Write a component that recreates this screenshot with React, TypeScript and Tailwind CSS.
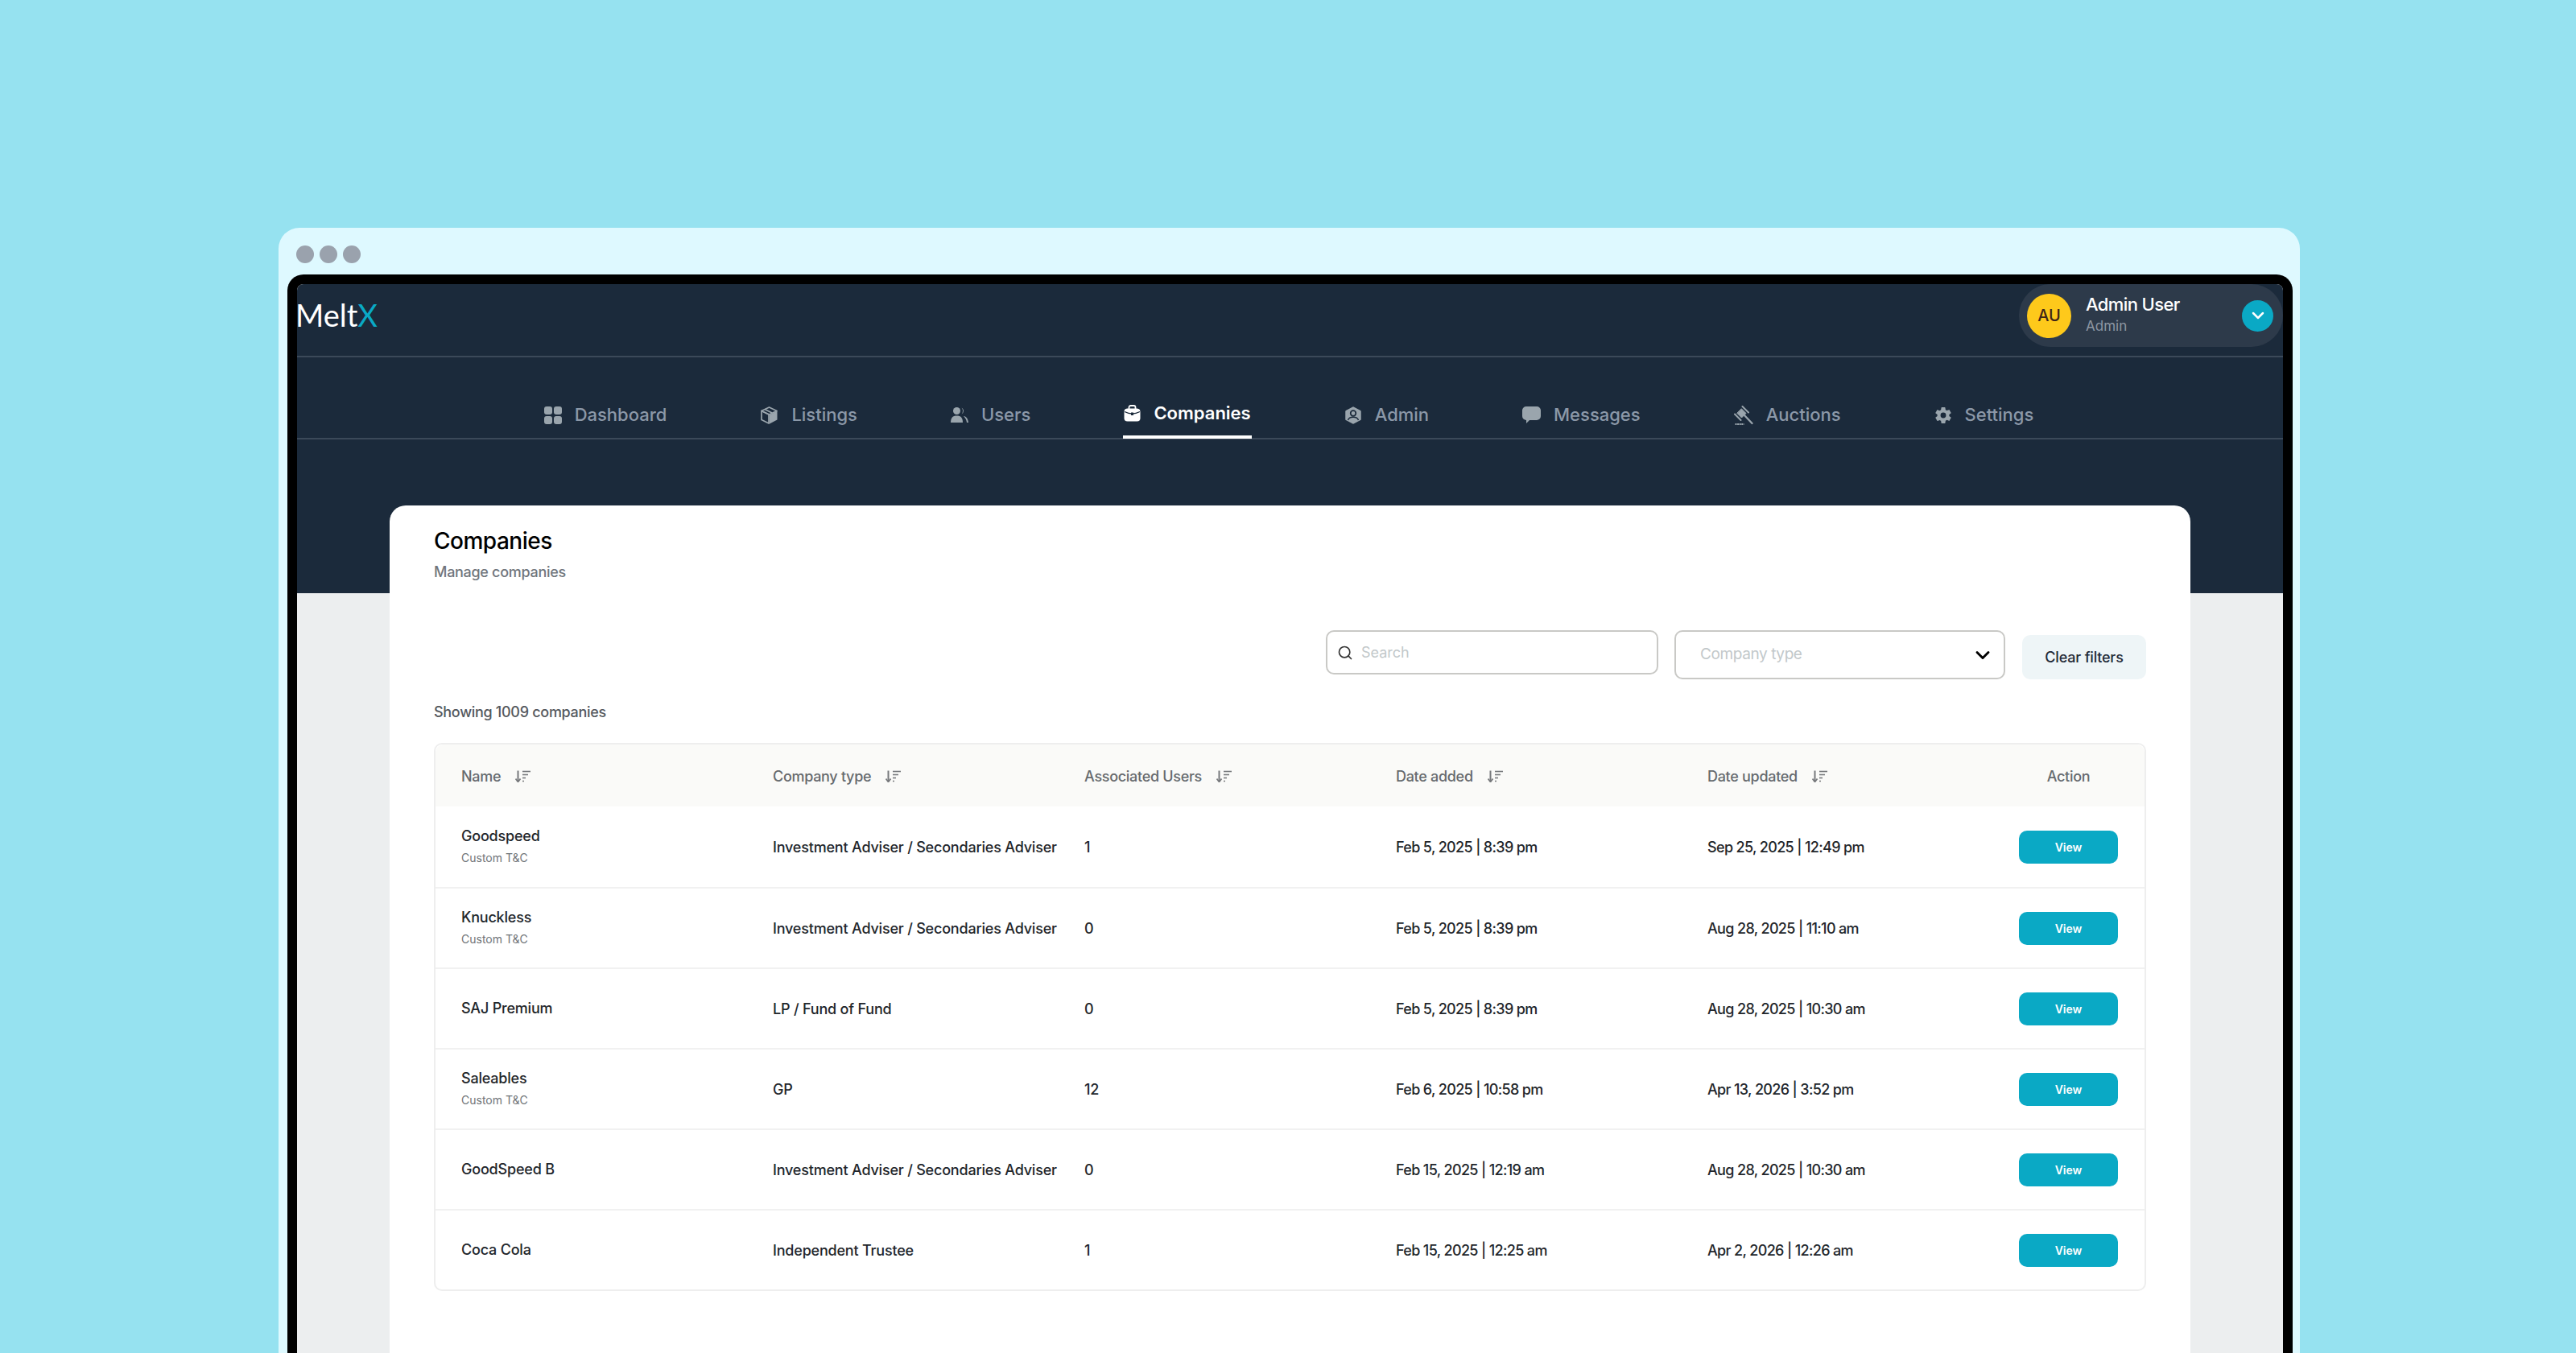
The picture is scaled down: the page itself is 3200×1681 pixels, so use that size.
import { ChevronDown, Search } from 'lucide-react'
import { IoSettingsSharp } from 'react-icons/io5'

const FONT = "font-['Inter',sans-serif]"

function DashboardIcon({ className }: { className?: string }) {
  return (
    <svg viewBox="0 0 22 22" className={className} fill="currentColor">
      <rect x="0" y="0" width="10" height="10" rx="3" />
      <rect x="12" y="0" width="10" height="10" rx="3" />
      <rect x="0" y="12" width="10" height="10" rx="3" />
      <rect x="12" y="12" width="10" height="10" rx="3" />
    </svg>
  )
}

function BoxIcon({ className }: { className?: string }) {
  return (
    <svg viewBox="0 0 23 22" className={className} fill="currentColor">
      <path d="M11.500 1 2 5.500 11.500 10 21 5.500z" fill="none" stroke="currentColor" strokeWidth="1.700" strokeLinejoin="round" />
      <path d="M2 5.500v11L11 21V10z" fill="none" stroke="currentColor" strokeWidth="1.700" strokeLinejoin="round" />
      <path d="M12 10.500l9.500-5v11L12 21.500z" />
      <path d="M6 3.500l9 4.500" fill="none" stroke="currentColor" strokeWidth="1.700" />
    </svg>
  )
}

function UsersIcon({ className }: { className?: string }) {
  return (
    <svg viewBox="0 0 22 19" className={className} fill="currentColor">
      <circle cx="7.500" cy="4.500" r="4.500" />
      <path d="M0 19c0-6 2.500-8.500 7.500-8.500S15 13 15 19z" />
      <path d="M13.500.5a4.500 4.500 0 0 1 0 8 6.500 6.500 0 0 0 0-8z" />
      <path d="M16 11c3.500.5 5.500 3.500 6 8h-2c-.5-3-1.500-5.500-4-8z" />
    </svg>
  )
}

function BriefcaseIcon({ className }: { className?: string }) {
  return (
    <svg viewBox="0 0 21 21" className={className}>
      <path d="M6.500 5V3a2 2 0 0 1 2-2h4a2 2 0 0 1 2 2v2" fill="none" stroke="currentColor" strokeWidth="1.800" />
      <rect x="0.500" y="4.500" width="20" height="16" rx="4" fill="currentColor" />
      <path d="M1 8.500c3 1.500 6 2.500 9.500 2.500S17 10 20 8.500" fill="none" stroke="#1b2a3b" strokeWidth="1.300" />
      <rect x="9" y="9.500" width="3" height="3.500" fill="#1b2a3b" />
    </svg>
  )
}

function AdminIcon({ className }: { className?: string }) {
  return (
    <svg viewBox="0 0 22 22" className={className}>
      <path d="M11 1.500l8.500 4.500v10L11 20.500 2.500 16V6z" fill="currentColor" stroke="currentColor" strokeWidth="2.500" strokeLinejoin="round" />
      <circle cx="11" cy="8.500" r="3.300" fill="none" stroke="#1b2a3b" strokeWidth="1.700" />
      <path d="M4.500 17c.8-2.500 3-3.800 6.500-3.800s5.700 1.300 6.500 3.800" fill="none" stroke="#1b2a3b" strokeWidth="1.500" />
    </svg>
  )
}

function BubbleIcon({ className }: { className?: string }) {
  return (
    <svg viewBox="0 0 23 21" className={className} fill="currentColor">
      <path d="M5 0h13a5 5 0 0 1 5 5v7a5 5 0 0 1-5 5H9l-4 4v-4a5 5 0 0 1-5-5V5a5 5 0 0 1 5-5z" />
    </svg>
  )
}

function GavelIcon({ className }: { className?: string }) {
  return (
    <svg viewBox="0 0 24 24" className={className} fill="none" stroke="currentColor" strokeLinecap="round">
      <path d="M9.500 4 15 9.500 9.500 15 4 9.500z" fill="currentColor" strokeWidth="1" />
      <path d="M10.500 1 18 8.500" strokeWidth="2" />
      <path d="M1 10.500 8.500 18" strokeWidth="2" />
      <path d="M13 12l9.500 10" strokeWidth="2.300" />
      <path d="M1.500 23h11" strokeWidth="2" strokeDasharray="2 .6" strokeLinecap="butt" />
    </svg>
  )
}

function SortIcon() {
  return (
    <svg viewBox="0 0 19 15" className="h-[15px] w-[19px] text-[#77797c]" fill="none" stroke="currentColor">
      <path d="M3.500 0.500V13.500" strokeWidth="2" />
      <path d="M0.500 10.500 3.500 14.500 6.500 10.500" strokeWidth="1.800" />
      <path d="M9 1.500h10" strokeWidth="1.600" />
      <path d="M9 5.500h7" strokeWidth="1.600" />
      <path d="M9 9.500h4" strokeWidth="1.600" />
      <path d="M9 13.500h2" strokeWidth="1.400" />
    </svg>
  )
}

const NAV = [
  { label: 'Dashboard', icon: DashboardIcon, iconClass: 'w-[22px] h-[22px]' },
  { label: 'Listings', icon: BoxIcon, iconClass: 'w-[23px] h-[22px]' },
  { label: 'Users', icon: UsersIcon, iconClass: 'w-[22px] h-[19px]' },
  { label: 'Companies', icon: BriefcaseIcon, iconClass: 'w-[21px] h-[21px]', active: true },
  { label: 'Admin', icon: AdminIcon, iconClass: 'w-[22px] h-[22px]' },
  { label: 'Messages', icon: BubbleIcon, iconClass: 'w-[23px] h-[21px]' },
  { label: 'Auctions', icon: GavelIcon, iconClass: 'w-[24px] h-[24px]' },
  { label: 'Settings', icon: IoSettingsSharp, iconClass: 'w-[22px] h-[22px]' },
]

const HEADERS = ['Name', 'Company type', 'Associated Users', 'Date added', 'Date updated']

const ROWS = [
  { name: 'Goodspeed', custom: true, type: 'Investment Adviser / Secondaries Adviser', users: '1', added: 'Feb 5, 2025 | 8:39 pm', updated: 'Sep 25, 2025 | 12:49 pm' },
  { name: 'Knuckless', custom: true, type: 'Investment Adviser / Secondaries Adviser', users: '0', added: 'Feb 5, 2025 | 8:39 pm', updated: 'Aug 28, 2025 | 11:10 am' },
  { name: 'SAJ Premium', custom: false, type: 'LP / Fund of Fund', users: '0', added: 'Feb 5, 2025 | 8:39 pm', updated: 'Aug 28, 2025 | 10:30 am' },
  { name: 'Saleables', custom: true, type: 'GP', users: '12', added: 'Feb 6, 2025 | 10:58 pm', updated: 'Apr 13, 2026 | 3:52 pm' },
  { name: 'GoodSpeed B', custom: false, type: 'Investment Adviser / Secondaries Adviser', users: '0', added: 'Feb 15, 2025 | 12:19 am', updated: 'Aug 28, 2025 | 10:30 am' },
  { name: 'Coca Cola', custom: false, type: 'Independent Trustee', users: '1', added: 'Feb 15, 2025 | 12:25 am', updated: 'Apr 2, 2026 | 12:26 am' },
]

const COLS = 'grid grid-cols-[387px_387px_387px_387px_387px_1fr] items-center'

export default function App() {
  return (
    <div className={`${FONT} h-[1681px] w-full overflow-hidden bg-[#96e2f0] pt-[283px] pr-[343px] pl-[346px]`}>
      <div className="flex h-full flex-col rounded-t-[26px] bg-[#def9ff] pr-[9px] pl-[11px]">
        <div className="flex h-[58px] shrink-0 items-start gap-[7px] pt-[22px] pl-[11px]">
          <span className="h-[22px] w-[22px] rounded-full bg-[#9aa2ad]" />
          <span className="h-[22px] w-[22px] rounded-full bg-[#9aa2ad]" />
          <span className="h-[22px] w-[22px] rounded-full bg-[#9aa2ad]" />
        </div>
        <div className="flex-1 rounded-t-[20px] border-x-[12px] border-t-[12px] border-black bg-[#eceeef]">
          <div className="h-[384px] rounded-t-[8px] bg-[#1b2a3b]">
            <div className="flex h-[91px] items-start justify-between border-b-2 border-[#3b4959]">
              <div className="-ml-[2px] pt-[15px] font-['Lato',sans-serif] text-[38px] leading-[46px] text-white">
                Melt<span className="text-[#0aa9c5]">X</span>
              </div>
              <div className="flex h-[78px] w-[328px] items-center rounded-full bg-[#2d3a4a] pr-[12px] pl-[10px]">
                <div className="flex h-[55px] w-[55px] items-center justify-center rounded-full bg-[#fec91b] text-[20px] font-medium text-[#3f2518]">
                  AU
                </div>
                <div className="ml-[18px] flex-1">
                  <div className="-mt-[2px] text-[22px] leading-[28px] font-medium tracking-[-0.6px] text-white">Admin User</div>
                  <div className="text-[17px] leading-[27px] text-[#8d97a3]">Admin</div>
                </div>
                <div className="flex h-[39px] w-[39px] items-center justify-center rounded-full bg-[#0aa9c5]">
                  <ChevronDown className="h-[24px] w-[24px] text-white" strokeWidth={2.5} />
                </div>
              </div>
            </div>
            <div className="flex h-[102px] items-end justify-center gap-[114px] border-b-2 border-[#3b4959] pr-[3px]">
              {NAV.map((item) => {
                const Icon = item.icon
                return (
                  <div
                    key={item.label}
                    className={`-mb-[1px] flex h-[52px] items-center gap-[16px] border-b-[4px] px-[1px] text-[22px] ${
                      item.active
                        ? 'border-white pb-[7px] font-semibold text-white'
                        : 'border-transparent pb-[3px] font-medium text-[#8b98a8]'
                    }`}
                  >
                    <Icon className={`${item.iconClass} ${item.active ? 'text-white' : 'text-[#9aa5ad]'}`} />
                    {item.label}
                  </div>
                )
              })}
            </div>
          </div>
          <div className="mx-[115px] -mt-[109px] h-[1200px] rounded-t-[20px] bg-white px-[55px] pt-[26px]">
            <h1 className="text-[28px] leading-[36px] font-medium tracking-[-0.5px] text-black">Companies</h1>
            <p className="mt-[9px] text-[18px] leading-[24px] font-medium tracking-[-0.3px] text-[#71767c]">Manage companies</p>
            <div className="mt-[60px] flex items-start justify-end">
              <div className="flex h-[55px] w-[413px] items-center gap-[10px] rounded-[10px] border-2 border-[#c9c9c6] pl-[12px]">
                <Search className="h-[20px] w-[20px] text-[#333]" />
                <span className="text-[18px] text-[#c2c8ca]">Search</span>
              </div>
              <div className="ml-[20px] flex h-[61px] w-[411px] items-center justify-between rounded-[10px] border-2 border-[#c9c9c6] pr-[12px] pl-[30px]">
                <span className="text-[19px] tracking-[-0.4px] text-[#c2c8ca]">Company type</span>
                <ChevronDown className="h-[28px] w-[28px] text-black" strokeWidth={2.5} />
              </div>
              <div className="mt-[6px] ml-[21px] flex h-[55px] w-[154px] items-center justify-center rounded-[10px] bg-[#eef5f7] text-[18px] font-medium tracking-[-0.2px] text-[#1f2a37]">
                Clear filters
              </div>
            </div>
            <p className="mt-[29px] text-[18px] leading-[24px] font-medium tracking-[-0.3px] text-[#55595e]">Showing 1009 companies</p>
            <div className="mt-[26px] rounded-[10px] border-2 border-[#eeeeee]">
              <div className={`${COLS} h-[77px] rounded-t-[10px] bg-[#fafaf8] pt-[1px] pl-[32px]`}>
                {HEADERS.map((h) => (
                  <div key={h} className="flex items-center gap-[18px] text-[18px] font-medium tracking-[-0.3px] text-[#666a6e]">
                    {h}
                    <SortIcon />
                  </div>
                ))}
                <div className="pr-[33px] text-center text-[18px] font-medium tracking-[-0.3px] text-[#666a6e]">Action</div>
              </div>
              {ROWS.map((r, i) => (
                <div key={r.name} className={`${COLS} h-[100px] pl-[32px] ${i > 0 ? 'border-t-2 border-[#f1f1f1]' : ''}`}>
                  <div className={r.custom ? 'pb-[4px]' : ''}>
                    <div className="text-[18px] leading-[24px] font-medium tracking-[-0.2px] text-[#22262b]">{r.name}</div>
                    {r.custom && <div className="mt-[7px] text-[14px] leading-[16px] text-[#6f7479]">Custom T&amp;C</div>}
                  </div>
                  <div className="text-[18px] font-medium tracking-[-0.2px] text-[#22262b]">{r.type}</div>
                  <div className="text-[18px] font-medium tracking-[-0.2px] text-[#22262b]">{r.users}</div>
                  <div className="text-[18px] font-medium tracking-[-0.65px] text-[#22262b]">{r.added}</div>
                  <div className="text-[18px] font-medium tracking-[-0.65px] text-[#22262b]">{r.updated}</div>
                  <div className="flex justify-end pr-[33px]">
                    <button className="h-[41px] w-[123px] rounded-[10px] bg-[#0aa9c5] text-[14px] font-semibold text-white">View</button>
                  </div>
                </div>
              ))}
            </div>
          </div>
        </div>
      </div>
    </div>
  )
}
